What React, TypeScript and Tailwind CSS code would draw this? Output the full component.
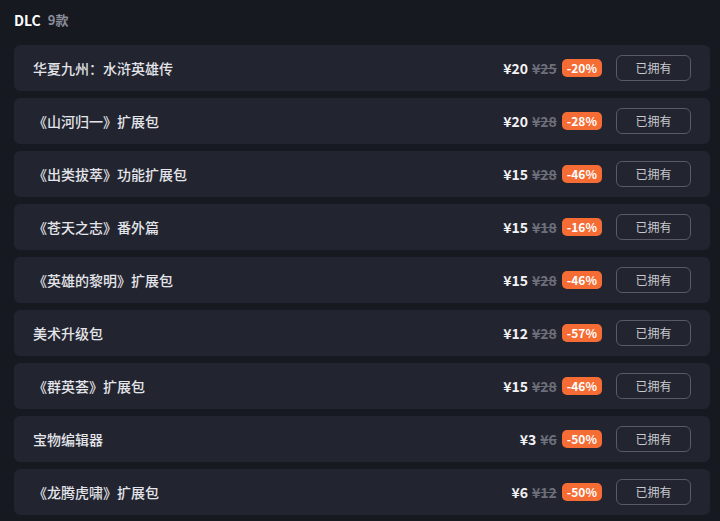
import React from "react";

type Dlc = { name: string; price: number; original: number; off: number };

const items: Dlc[] = [
  { name: "华夏九州：水浒英雄传", price: 20, original: 25, off: 20 },
  { name: "《山河归一》扩展包", price: 20, original: 28, off: 28 },
  { name: "《出类拔萃》功能扩展包", price: 15, original: 28, off: 46 },
  { name: "《苍天之志》番外篇", price: 15, original: 18, off: 16 },
  { name: "《英雄的黎明》扩展包", price: 15, original: 28, off: 46 },
  { name: "美术升级包", price: 12, original: 28, off: 57 },
  { name: "《群英荟》扩展包", price: 15, original: 28, off: 46 },
  { name: "宝物编辑器", price: 3, original: 6, off: 50 },
  { name: "《龙腾虎啸》扩展包", price: 6, original: 12, off: 50 },
];

const font = { fontFamily: '"Noto Sans CJK SC", "Noto Sans", sans-serif' };

function Row({ item }: { item: Dlc }) {
  return (
    <div className="flex h-[46px] items-center rounded-md bg-[#22242f] pl-[19px] pr-[19px]">
      <div className="flex-1 text-[14px] font-medium text-[#e4e5ea]">{item.name}</div>
      <div className="flex items-center">
        <span className="text-[14px] font-bold text-[#f2f2f4]">¥{item.price}</span>
        <span className="ml-[4px] text-[14px] font-bold text-[#6c6f7a] line-through">¥{item.original}</span>
        <span className="ml-[5px] flex h-[18px] items-center rounded-[5px] bg-[#f56c35] px-[5px] text-[12px] font-bold leading-none text-white">
          -{item.off}%
        </span>
        <button className="ml-[14px] flex h-[26px] w-[75px] items-center justify-center rounded-md border border-[#585b66] text-[12px] text-[#c9cad0]">
          已拥有
        </button>
      </div>
    </div>
  );
}

export default function App() {
  return (
    <div className="h-[521px] w-[720px] overflow-hidden bg-[#171921] pl-[14px] pr-[10px]" style={font}>
      <div className="flex h-[39px] items-center gap-[7px] pt-[1px]">
        <span className="text-[14px] font-bold text-white">DLC</span>
        <span className="text-[13px] font-bold text-[#8a8d98]">9款</span>
      </div>
      <div className="mt-[6px] flex flex-col gap-[7px]">
        {items.map((it) => (
          <Row key={it.name} item={it} />
        ))}
      </div>
    </div>
  );
}
